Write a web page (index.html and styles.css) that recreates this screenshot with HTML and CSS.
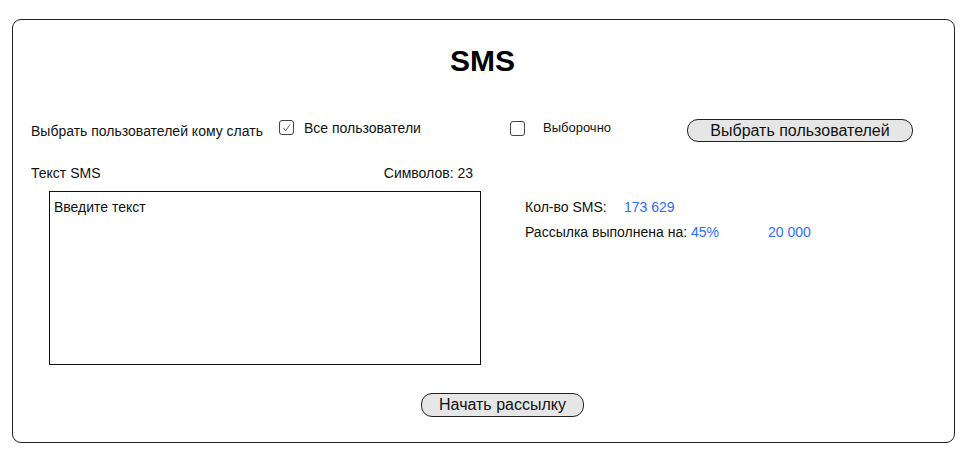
FILE: index.html
```html
<!DOCTYPE html>
<html lang="ru">
<head>
<meta charset="utf-8">
<title>SMS</title>
<link rel="stylesheet" href="styles.css">
</head>
<body>
<div class="card">
  <h1 class="title">SMS</h1>
  <div class="row-users">
    <span class="lbl-users">Выбрать пользователей кому слать</span>
    <span class="cb cb-1"><svg width="13" height="13" viewBox="0 0 13 13"><path d="M3.5 7 L5.5 9.8 L10 3.5" fill="none" stroke="#666" stroke-width="1"/></svg></span>
    <span class="lbl-all">Все пользователи</span>
    <span class="cb cb-2"></span>
    <span class="lbl-sel">Выборочно</span>
    <button class="btn btn-pick" type="button">Выбрать пользователей</button>
  </div>
  <div class="row-main">
    <div class="col-text">
      <div class="text-head">
        <span>Текст SMS</span>
        <span>Символов: 23</span>
      </div>
      <div class="textarea"><span class="placeholder">Введите текст</span></div>
    </div>
    <div class="col-stats">
      <div class="stat"><span class="stat-lbl">Кол-во SMS:</span><span class="val">173 629</span></div>
      <div class="stat"><span>Рассылка выполнена на:&nbsp;</span><span class="val val-pct">45%</span><span class="val">20 000</span></div>
    </div>
  </div>
  <div class="row-start">
    <button class="btn btn-start" type="button">Начать рассылку</button>
  </div>
</div>
</body>
</html>
```
FILE: styles.css
```css
* { box-sizing: border-box; }
body {
  margin: 0;
  background: #fff;
  font-family: "Liberation Sans", Arial, sans-serif;
  color: #111;
  font-size: 14px;
  line-height: 16px;
}
.card {
  margin: 19px 0 0 12px;
  width: 943px;
  height: 424px;
  border: 1px solid #222;
  border-radius: 9px;
  display: flex;
  flex-direction: column;
}
.title {
  margin: 23px 0 0 0;
  font-size: 30px;
  line-height: 36px;
  font-weight: bold;
  text-align: center;
  color: #000;
  padding-right: 2px;
}
.row-users {
  margin-top: 39px;
  padding-left: 18px;
  height: 24px;
  display: flex;
  align-items: flex-start;
}
.lbl-users { margin-top: 5px; width: 248px; white-space: nowrap; }
.cb {
  width: 15px;
  height: 15px;
  border: 1px solid #444;
  border-radius: 3px;
  display: flex;
  align-items: center;
  justify-content: center;
  background: #fff;
}
.cb-1 { margin-top: 2px; }
.cb-2 { margin-top: 3px; }
.lbl-all { margin-top: 2px; margin-left: 10px; width: 206px; white-space: nowrap; }
.lbl-sel { margin-top: 2px; margin-left: 18px; width: 144px; font-size: 13px; white-space: nowrap; }
.btn {
  font-family: "Liberation Sans", Arial, sans-serif;
  font-size: 16px;
  line-height: 18px;
  color: #111;
  background: #e6e6e6;
  border: 1px solid #222;
  border-radius: 11px;
  padding: 0;
  display: flex;
  align-items: center;
  justify-content: center;
}
.btn-pick { width: 226px; height: 23px; margin-top: 1px; }
.row-main {
  margin-top: 23px;
  padding-left: 18px;
  display: flex;
  align-items: flex-start;
}
.col-text { width: 450px; }
.text-head {
  width: 442px;
  display: flex;
  justify-content: space-between;
}
.textarea {
  margin: 10px 0 0 18px;
  width: 432px;
  height: 174px;
  border: 1px solid #111;
  padding: 7px 4px;
}
.placeholder { color: #111; }
.col-stats {
  margin-left: 44px;
  margin-top: 30px;
  display: flex;
  flex-direction: column;
}
.stat { display: flex; line-height: 25px; white-space: nowrap; }
.stat-lbl { width: 99px; }
.val { color: #2d6bff; }
.val-pct { width: 77px; }
.row-start {
  margin-top: 28px;
  padding-left: 408px;
  display: flex;
}
.btn-start { width: 163px; height: 24px; }
```
